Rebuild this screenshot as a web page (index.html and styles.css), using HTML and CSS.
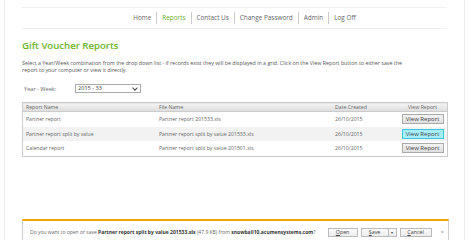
FILE: index.html
```html
<!DOCTYPE html>
<html lang="en">
<head>
<meta charset="utf-8">
<title>Gift Voucher Reports</title>
<link rel="stylesheet" href="styles.css">
</head>
<body>
<div class="page">
	<div class="nav">
		<a href="#">Home</a>
		<a href="#" class="active">Reports</a>
		<a href="#">Contact Us</a>
		<a href="#">Change Password</a>
		<a href="#">Admin</a>
		<a href="#">Log Off</a>
	</div>

	<h1>Gift Voucher Reports</h1>
	<p class="intro">Select a Year/Week combination from the drop down list - if records exist they will be displayed in a grid. Click on the View Report button to either save the report to your computer or view it directly.</p>

	<div class="filter">
		<label>Year - Week:</label>
		<div class="select">2015 - 33<span class="arrow"></span></div>
	</div>

	<table class="grid">
		<thead>
			<tr><th class="c1">Report Name</th><th class="c2">File Name</th><th class="c3">Date Created</th><th class="c4">View Report</th></tr>
		</thead>
		<tbody>
			<tr><td>Partner report</td><td>Partner report 201533.xls</td><td>26/10/2015</td><td class="c4"><button>View Report</button></td></tr>
			<tr class="alt"><td>Partner report split by value</td><td>Partner report split by value 201533.xls</td><td>26/10/2015</td><td class="c4"><button class="hover">View Report</button></td></tr>
			<tr><td>Calendar report</td><td>Partner report split by value 201501.xls</td><td>26/10/2015</td><td class="c4"><button>View Report</button></td></tr>
		</tbody>
	</table>

	<div class="download">
		<div class="msg">Do you want to open or save <b>Partner report split by value 201533.xls</b> (47.9 KB) from <b>snowball10.acumensystems.com</b>?</div>
		<div class="actions">
			<span class="btn open"><u>O</u>pen</span>
			<span class="split"><span class="btn save"><u>S</u>ave</span><span class="btn drop">&#9662;</span></span>
			<span class="btn cancel"><u>C</u>ancel</span>
			<span class="close">&#215;</span>
		</div>
	</div>
</div>
</body>
</html>
```
FILE: styles.css
```css
html, body {
	margin: 0;
	padding: 0;
	background: #fff;
}
body {
	font-family: "Open Sans", "Noto Sans", sans-serif;
	color: #555;
}
.page {
	margin: 0 4px 0 4px;
	width: 461px;
	height: 240px;
	box-sizing: border-box;
	border-left: 1px solid #ececec;
	border-right: 1px solid #ececec;
	padding: 7px 17px 0 17px;
	overflow: hidden;
}

/* top menu */
.nav {
	border-top: 1px solid #f0f0f0;
	border-bottom: 1px solid #f0f0f0;
	height: 20px;
	display: flex;
	justify-content: center;
	align-items: center;
	padding-left: 20px;
}
.nav a {
	font-size: 6.4px;
	color: #666;
	text-decoration: none;
	padding: 0 5px;
	border-left: 1px solid #ccc;
	line-height: 12px;
}
.nav a:first-child {
	border-left: none;
}
.nav a.active {
	color: #6cb32a;
}

h1 {
	margin: 10px 0 0 0;
	font-size: 9.6px;
	font-weight: 600;
	color: #6cb32a;
	line-height: 14px;
}
.intro {
	margin: 7px 0 0 0;
	font-size: 5.3px;
	line-height: 6.5px;
	color: #555;
	width: 394px;
}

.filter {
	display: flex;
	align-items: center;
	margin-top: 11px;
	padding-left: 2px;
	font-size: 5.6px;
	color: #666;
}
.filter label {
	width: 51px;
}
.select {
	width: 66px;
	height: 9px;
	box-sizing: border-box;
	border: 1px solid #aaa;
	font-size: 5.6px;
	line-height: 7px;
	padding-left: 2px;
	position: relative;
	color: #444;
}
.select .arrow {
	position: absolute;
	right: 3px;
	top: 1px;
	width: 3px;
	height: 3px;
	border-right: 1px solid #444;
	border-bottom: 1px solid #444;
	transform: rotate(45deg);
}

/* report grid */
.grid {
	margin-top: 9px;
	width: 426px;
	border-collapse: collapse;
	border: 1px solid #ccc;
	font-size: 5.2px;
	color: #666;
}
.grid th {
	background: linear-gradient(#f4f4f4, #dcdcdc);
	font-weight: normal;
	text-align: left;
	height: 7px;
	padding: 0 3px;
	border-bottom: 1px solid #ccc;
	color: #666;
}
.grid th.c1 { width: 127px; }
.grid th.c2 { width: 170px; }
.grid th.c3 { width: 60px; }
.grid .c4 { text-align: center; }
.grid td {
	height: 14.5px;
	padding: 0 3px;
}
.grid tr.alt td {
	background: #f2f2f2;
}
.grid button {
	font-family: "Open Sans", "Noto Sans", sans-serif;
	font-size: 6px;
	color: #444;
	background: linear-gradient(#f4f4f4, #dedede);
	border: 1px solid #aaa;
	width: 42px;
	height: 10px;
	padding: 0;
	line-height: 8px;
}
.grid button.hover {
	background: #a6effa;
	border-color: #3cc5dd;
}

/* download prompt */
.download {
	margin-top: 62px;
	width: 427px;
	height: 30px;
	box-sizing: border-box;
	border: 1px solid #ccc;
	border-top: 2px solid #f2a60c;
	display: flex;
	align-items: flex-start;
	justify-content: space-between;
	padding: 7px 4px 0 7px;
	font-size: 5px;
	color: #666;
}
.download .msg {
	line-height: 9px;
}
.download b {
	color: #333;
}
.actions {
	display: flex;
	align-items: center;
	gap: 3px;
}
.btn {
	display: inline-block;
	box-sizing: border-box;
	height: 9px;
	line-height: 7px;
	border: 1px solid #bbb;
	background: linear-gradient(#fbfbfb, #ececec);
	text-align: center;
	color: #444;
	font-size: 5.3px;
}
.btn.open { width: 30px; }
.btn.save { width: 28px; }
.btn.drop { width: 8px; border-left: none; font-size: 4px; }
.btn.cancel { width: 32px; }
.split { display: flex; }
.close {
	margin-left: 6px;
	color: #888;
	font-size: 6px;
}
```
